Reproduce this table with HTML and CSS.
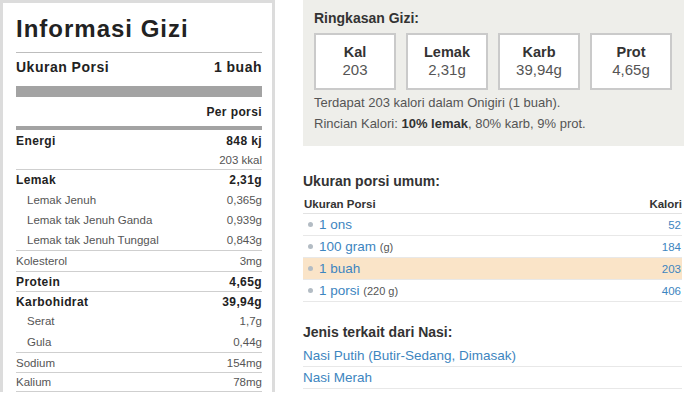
FILE: index.html
```html
<!DOCTYPE html>
<html lang="id">
<head>
<meta charset="utf-8">
<title>Informasi Gizi</title>
<link rel="stylesheet" href="styles.css">
</head>
<body>
<div class="page">
  <section class="label">
    <h1 class="label-title">Informasi Gizi</h1>
    <div class="serving"><span>Ukuran Porsi</span><span>1 buah</span></div>
    <div class="bar-thick"></div>
    <div class="per">Per porsi</div>
    <div class="bar-mid"></div>
    <div class="row main h21"><span>Energi</span><span>848 kj</span></div>
    <div class="row kkal"><span></span><span>203 kkal</span></div>
    <div class="row main line h21"><span>Lemak</span><span>2,31g</span></div>
    <div class="row sub"><span>Lemak Jenuh</span><span>0,365g</span></div>
    <div class="row sub"><span>Lemak tak Jenuh Ganda</span><span>0,939g</span></div>
    <div class="row sub"><span>Lemak tak Jenuh Tunggal</span><span>0,843g</span></div>
    <div class="row plain line h21"><span>Kolesterol</span><span>3mg</span></div>
    <div class="row main line"><span>Protein</span><span>4,65g</span></div>
    <div class="row main line"><span>Karbohidrat</span><span>39,94g</span></div>
    <div class="row sub"><span>Serat</span><span>1,7g</span></div>
    <div class="row sub h21"><span>Gula</span><span>0,44g</span></div>
    <div class="row plain line"><span>Sodium</span><span>154mg</span></div>
    <div class="row plain line last"><span>Kalium</span><span>78mg</span></div>
  </section>

  <main class="side">
    <div class="summary">
      <h2 class="summary-title">Ringkasan Gizi:</h2>
      <div class="boxes">
        <div class="box"><div class="box-label">Kal</div><div class="box-value">203</div></div>
        <div class="box"><div class="box-label">Lemak</div><div class="box-value">2,31g</div></div>
        <div class="box"><div class="box-label">Karb</div><div class="box-value">39,94g</div></div>
        <div class="box"><div class="box-label">Prot</div><div class="box-value">4,65g</div></div>
      </div>
      <p class="summary-text first">Terdapat 203 kalori dalam Onigiri (1 buah).</p>
      <p class="summary-text">Rincian Kalori: <strong>10% lemak</strong>, 80% karb, 9% prot.</p>
    </div>

    <h2 class="section-title">Ukuran porsi umum:</h2>
    <div class="serv-table">
      <div class="serv-head"><span>Ukuran Porsi</span><span>Kalori</span></div>
      <div class="serv-row"><a class="serv-link" href="#"><i class="dot"></i>1 ons</a><span class="serv-val">52</span></div>
      <div class="serv-row"><a class="serv-link" href="#"><i class="dot"></i>100 gram <small class="unit">(g)</small></a><span class="serv-val">184</span></div>
      <div class="serv-row active"><a class="serv-link" href="#"><i class="dot"></i>1 buah</a><span class="serv-val">203</span></div>
      <div class="serv-row"><a class="serv-link" href="#"><i class="dot"></i>1 porsi <small class="unit">(220 g)</small></a><span class="serv-val">406</span></div>
    </div>

    <h2 class="section-title related-title">Jenis terkait dari Nasi:</h2>
    <div class="related">
      <a class="related-link" href="#">Nasi Putih (Butir-Sedang, Dimasak)</a>
      <a class="related-link" href="#">Nasi Merah</a>
    </div>
  </main>
</div>
</body>
</html>
```

FILE: styles.css
```css
html, body {
  margin: 0;
  padding: 0;
  background: #fff;
  overflow: hidden;
}

body {
  font-family: "Liberation Sans", Arial, sans-serif;
  color: #333;
}

.page {
  display: flex;
  align-items: flex-start;
  gap: 28px;
}

/* ---------- Nutrition label ---------- */
.label {
  flex: none;
  width: 275px;
  box-sizing: border-box;
  border: 3px solid #dcdcdc;
  border-bottom: 0;
  padding: 12px 10px 0 13px;
  background: #fff;
}

.label-title {
  margin: 0;
  font-size: 24px;
  line-height: 28px;
  font-weight: bold;
  letter-spacing: 1px;
  color: #222;
  padding-bottom: 9px;
  border-bottom: 1px solid #bdbdbd;
}

.serving {
  display: flex;
  justify-content: space-between;
  align-items: baseline;
  padding-top: 5px;
  font-size: 14px;
  line-height: 18px;
  font-weight: bold;
  letter-spacing: 0.5px;
  color: #222;
}

.bar-thick {
  margin-top: 10px;
  height: 11px;
  background: #a3a3a3;
}

.per {
  margin-top: 7px;
  text-align: right;
  font-size: 12px;
  line-height: 16px;
  font-weight: bold;
  letter-spacing: 0.4px;
  color: #222;
}

.bar-mid {
  margin-top: 6px;
  height: 4px;
  background: #a3a3a3;
}

.row {
  display: flex;
  justify-content: space-between;
  align-items: center;
  height: 20px;
  box-sizing: border-box;
  font-size: 11.5px;
  color: #555;
}

.row.h21 {
  height: 21px;
}

.row.kkal {
  height: 18px;
}

.row.line {
  border-top: 1px solid #cfcfcf;
}

.row.last {
  border-bottom: 1px solid #cfcfcf;
}

.row.main {
  font-size: 12px;
  font-weight: bold;
  letter-spacing: 0.4px;
  color: #222;
}

.row.sub {
  padding-left: 11px;
}

/* ---------- Right side ---------- */
.side {
  flex: none;
  width: 381px;
}

.summary {
  background: #eeeeea;
  padding: 10px 10px 12px 11px;
}

.summary-title {
  margin: 0 0 6px;
  font-size: 14px;
  line-height: 17px;
  font-weight: bold;
  color: #333;
}

.boxes {
  display: flex;
  gap: 10px;
}

.box {
  width: 82px;
  height: 57px;
  box-sizing: border-box;
  border: 2px solid #cacaca;
  background: #fff;
  text-align: center;
  padding-top: 8px;
}

.box-label {
  font-size: 14.5px;
  line-height: 18px;
  font-weight: bold;
  color: #333;
}

.box-value {
  font-size: 15px;
  line-height: 18px;
  color: #555;
}

.summary-text {
  margin: 0;
  font-size: 13px;
  line-height: 21px;
  color: #555;
}

.summary-text.first {
  margin-top: 2px;
}

.summary-text strong {
  color: #333;
}

.section-title {
  margin: 27px 0 5px;
  font-size: 14px;
  line-height: 17px;
  font-weight: bold;
  color: #333;
}

.serv-table {
  width: 379px;
}

.serv-head {
  display: flex;
  justify-content: space-between;
  padding: 0 0 0 1px;
  font-size: 11.5px;
  line-height: 18px;
  font-weight: bold;
  color: #333;
  border-bottom: 1px solid #e2e2e2;
}

.serv-row {
  display: flex;
  justify-content: space-between;
  align-items: center;
  height: 22px;
  box-sizing: border-box;
  padding: 0 1px 0 5px;
  border-bottom: 1px solid #e8e8e8;
}

.serv-row.active {
  background: #fae4c8;
}

.serv-link {
  display: flex;
  align-items: center;
  font-size: 13.5px;
  color: #3d85c0;
  text-decoration: none;
  white-space: pre;
}

.dot {
  display: inline-block;
  width: 5px;
  height: 5px;
  border-radius: 50%;
  background: #b3bcc4;
  margin-right: 6px;
}

.unit {
  font-size: 11px;
  color: #555;
}

.serv-val {
  font-size: 11.5px;
  color: #3d85c0;
}

.related-title {
  margin: 22px 0 4px;
}

.related {
  display: flex;
  flex-direction: column;
  width: 379px;
}

.related-link {
  font-size: 13.5px;
  line-height: 21px;
  color: #3d85c0;
  text-decoration: none;
  border-bottom: 1px solid #e8e8e8;
}
```
